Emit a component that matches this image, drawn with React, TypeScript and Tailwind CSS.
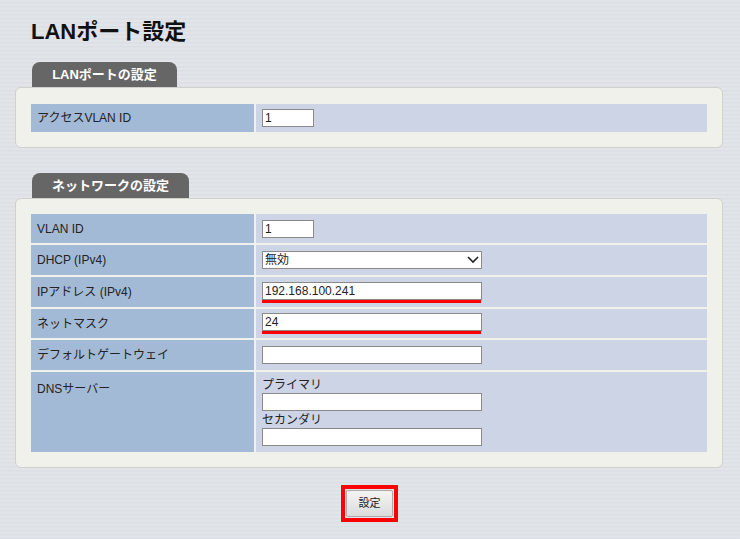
export default function App() {
  const f = { fontFamily: '"Liberation Sans","Noto Sans CJK JP",sans-serif' };
  const label = "bg-[#a2bad6] px-[6px] text-[12px] text-[#222] w-[223px] shrink-0";
  const val = "bg-[#cdd4e6] flex-1 pl-[6px] text-[12px] text-[#222]";
  const inp = "h-[18px] border border-[#8a8a8a] bg-white text-[12px] px-[2px] leading-[16px]";
  return (
    <div style={f} className="w-[740px] h-[539px] overflow-hidden bg-[repeating-linear-gradient(180deg,#e1e4e9_0px,#e1e4e9_2px,#d6dae0_3px,#e6e8ec_4px)]">
      <div className="pl-[31px] pt-[15px] text-[22px] font-bold text-[#111] h-[62px]">LANポート設定</div>
      <div className="ml-[32px] w-[145px] h-[25px] bg-[#666] rounded-t-[8px] text-white font-bold text-[13px] flex items-center justify-center">LANポートの設定</div>
      <div className="ml-[15px] w-[708px] h-[61px] bg-[#f1f1ec] border border-[#d0d0cc] rounded-[6px] pt-[16px] pl-[15px]">
        <div className="flex w-[676px] h-[28px] gap-[2px]">
          <div className={label + " flex items-center"}>アクセスVLAN ID</div>
          <div className={val + " flex items-center"}><div className={inp + " w-[52px]"}>1</div></div>
        </div>
      </div>
      <div className="ml-[32px] mt-[25px] w-[157px] h-[25px] bg-[#666] rounded-t-[8px] text-white font-bold text-[13px] flex items-center justify-center">ネットワークの設定</div>
      <div className="ml-[15px] w-[708px] h-[270px] bg-[#f1f1ec] border border-[#d0d0cc] rounded-[6px] pt-[15px] pl-[15px]">
        <div className="w-[676px] flex flex-col gap-[2px]">
          <div className="flex h-[29px] gap-[2px]">
            <div className={label + " flex items-center"}>VLAN ID</div>
            <div className={val + " flex items-center"}><div className={inp + " w-[52px]"}>1</div></div>
          </div>
          <div className="flex h-[30px] gap-[2px]">
            <div className={label + " flex items-center"}>DHCP (IPv4)</div>
            <div className={val + " flex items-center"}>
              <div className={inp + " w-[220px] flex items-center justify-between"}>
                <span>無効</span>
                <svg width="12" height="8" viewBox="0 0 12 8"><path d="M1 1l5 5 5-5" fill="none" stroke="#222" strokeWidth="1.6"/></svg>
              </div>
            </div>
          </div>
          <div className="flex h-[30px] gap-[2px]">
            <div className={label + " flex items-center"}>IPアドレス (IPv4)</div>
            <div className={val + " flex flex-col justify-center"}>
              <div className={inp + " w-[220px]"}>192.168.100.241</div>
              <div className="w-[219px] h-[3px] bg-[#f00]"></div>
            </div>
          </div>
          <div className="flex h-[29px] gap-[2px]">
            <div className={label + " flex items-center"}>ネットマスク</div>
            <div className={val + " flex flex-col justify-center"}>
              <div className={inp + " w-[220px]"}>24</div>
              <div className="w-[219px] h-[3px] bg-[#f00]"></div>
            </div>
          </div>
          <div className="flex h-[30px] gap-[2px]">
            <div className={label + " flex items-center"}>デフォルトゲートウェイ</div>
            <div className={val + " flex items-center"}><div className={inp + " w-[220px]"}></div></div>
          </div>
          <div className="flex h-[80px] gap-[2px]">
            <div className={label + " pt-[8px]"}>DNSサーバー</div>
            <div className={val + " pt-[4px]"}>
              <div className="h-[15px]">プライマリ</div>
              <div className={inp + " w-[220px] mt-[2px]"}></div>
              <div className="h-[15px]">セカンダリ</div>
              <div className={inp + " w-[220px] mt-[2px]"}></div>
            </div>
          </div>
        </div>
      </div>
      <div className="flex justify-center mt-[17px] pl-[0px]">
        <div className="ml-[-1px] border-[4px] border-[#f00] p-[1px] w-[57px] h-[37px]">
          <div className="w-full h-full bg-[linear-gradient(#f4f4f4,#dcdcdc)] border border-[#aaa] rounded-[2px] text-[11px] flex items-center justify-center text-[#222]">設定</div>
        </div>
      </div>
    </div>
  );
}
